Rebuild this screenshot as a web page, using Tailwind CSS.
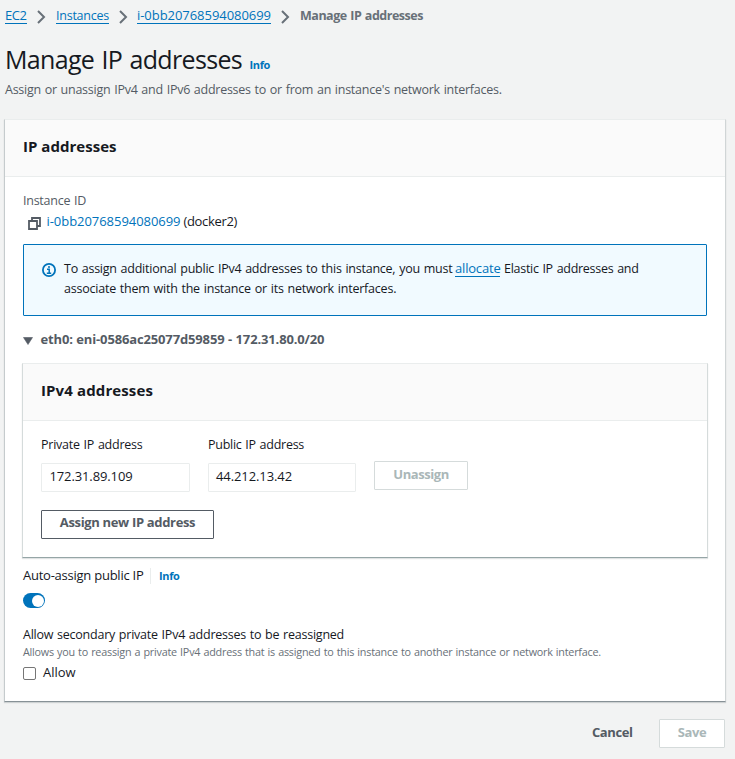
<!DOCTYPE html>
<html lang="en">
<head>
<meta charset="utf-8">
<title>Manage IP addresses</title>
<script src="https://cdn.jsdelivr.net/npm/@tailwindcss/browser@4"></script>
</head>
<body class="h-[759px] overflow-hidden bg-[#f2f3f3] font-['Open_Sans','Noto_Sans',sans-serif] text-[13px] leading-[20px] whitespace-nowrap text-[#16191f]">

<nav class="flex h-[25px] items-start pt-[5px] pl-[5px] text-[#0073bb]">
  <a class="h-[19px] w-[22px] border-b border-[#0073bb] tracking-[-0.45px]">EC2</a>
  <svg class="mt-[5px] ml-[10px] h-[14px] w-[9px]" viewBox="0 0 9 14" fill="none" stroke="#687078" stroke-width="2"><path d="M1 1l6 6-6 6"/></svg>
  <a class="ml-[10px] h-[19px] w-[53px] border-b border-[#0073bb] pt-px text-[12.5px] tracking-[-0.244px]">Instances</a>
  <svg class="mt-[5px] ml-[10px] h-[14px] w-[9px]" viewBox="0 0 9 14" fill="none" stroke="#687078" stroke-width="2"><path d="M1 1l6 6-6 6"/></svg>
  <a class="ml-[9px] h-[19px] w-[134px] border-b border-[#0073bb] tracking-[-0.046px]">i-0bb20768594080699</a>
  <svg class="mt-[5px] ml-[10px] h-[14px] w-[9px]" viewBox="0 0 9 14" fill="none" stroke="#687078" stroke-width="2"><path d="M1 1l6 6-6 6"/></svg>
  <span class="mt-px ml-[10px] text-[12.5px] font-bold tracking-[-0.48px] [word-spacing:0.8px] text-[#687078]">Manage IP addresses</span>
</nav>

<header class="mt-[16px] h-[78px] pl-[5px]">
  <div class="flex h-[38px] items-baseline">
    <h1 class="w-[244.5px] text-[25px] leading-[36px] tracking-[-0.67px] [word-spacing:1.5px]">Manage IP addresses</h1>
    <a class="text-[11px] font-bold tracking-[-0.37px] text-[#0073bb]">Info</a>
  </div>
  <p class="h-[20px] pt-px text-[12.5px] tracking-[-0.254px] [word-spacing:0.8px] text-[#545b64]">Assign or unassign IPv4 and IPv6 addresses to or from an instance's network interfaces.</p>
</header>

<main class="ml-[4px] h-[583px] w-[722px] border border-t-[#eaeded] border-r-[#d0d5d6] border-b-[#879196] border-l-[#c5cbcd] bg-white shadow-[0_1px_1px_rgba(0,28,36,0.15)]">
  <div class="h-[57px] border-b border-[#eaeded] bg-[#fafafa] pt-[15px] pl-[18px]">
    <h2 class="text-[15px] leading-[22px] font-bold tracking-[0.022px]">IP addresses</h2>
  </div>

  <div class="px-[18px] pt-[13px]">
    <div class="h-[20px] pt-px text-[12.5px] tracking-[-0.255px] [word-spacing:0.8px] text-[#545b64]">Instance ID</div>
    <div class="mt-[1px] flex">
      <svg class="mt-[6px] ml-[5px] h-[13px] w-[13px]" viewBox="0 0 13 13" fill="none" stroke="#545b64" stroke-width="1.8"><path d="M1 4h8v8H1zM4 4V1h8v8H9"/></svg>
      <a class="ml-[5.5px] w-[137px] tracking-[-0.046px] text-[#0073bb]">i-0bb20768594080699</a>
      <span class="tracking-[-0.339px]">(docker2)</span>
    </div>

    <section class="mt-[13px] flex h-[72px] rounded-[1px] border border-[#0073bb] bg-[#f1faff] pt-[13px] pl-[18px]">
      <svg class="mt-[5px] h-[14px] w-[14px]" viewBox="0 0 14 14" fill="none" stroke="#0073bb"><circle cx="7" cy="7" r="6.1" stroke-width="1.8"/><path d="M7 3v2M5 6.3h2.2v4M4.8 10.2h4.4" stroke-width="1.5"/></svg>
      <div class="ml-[8px]">
        <div class="flex h-[20px]">
          <span class="mt-px w-[391px] text-[12.5px] tracking-[-0.24px] [word-spacing:0.8px]">To assign additional public IPv4 addresses to this instance, you must</span>
          <a class="h-[19px] w-[45px] border-b border-[#0073bb] tracking-[-0.188px] text-[#0073bb]">allocate</a>
          <span class="mt-px ml-[4px] text-[12.5px] tracking-[-0.28px] [word-spacing:0.8px]">Elastic IP addresses and</span>
        </div>
        <div class="h-[20px] pt-px text-[12.5px] tracking-[-0.217px] [word-spacing:0.8px]">associate them with the instance or its network interfaces.</div>
      </div>
    </section>

    <div class="mt-[13px] flex font-bold text-[#545b64]">
      <svg class="mt-[8px] h-[8px] w-[10px]" viewBox="0 0 10 8"><path d="M.5.5h9L5 7.5z" fill="#545b64" stroke="#545b64" stroke-width=".6"/></svg>
      <span class="ml-[7.5px] tracking-[-0.145px] [word-spacing:0.3px]">eth0: eni-0586ac25077d59859 - 172.31.80.0/20</span>
    </div>

    <section class="mt-[14px] -ml-px h-[195px] w-[686px] border border-t-[#eaeded] border-r-[#d5dbdb] border-b-[#95a5a6] border-l-[#d5dbdb] shadow-[0_1px_1px_rgba(0,28,36,0.12)]">
      <div class="h-[57px] border-b border-[#eaeded] bg-[#fafafa] pt-[15px] pl-[18px]">
        <h3 class="text-[15px] leading-[22px] font-bold tracking-[0.118px]">IPv4 addresses</h3>
      </div>
      <div class="pt-[13px] pl-[18px]">
        <div class="flex items-start">
          <div class="w-[149px]">
            <div class="h-[20px] pt-px text-[12.5px] tracking-[-0.24px] [word-spacing:0.8px]">Private IP address</div>
            <div class="mt-[9px] h-[29px] rounded-[1px] border border-[#eaeded] pt-[2px] pl-[7.5px] tracking-[-0.121px]">172.31.89.109</div>
          </div>
          <div class="ml-[18px] w-[148px]">
            <div class="h-[20px] pt-px text-[12.5px] tracking-[-0.265px] [word-spacing:0.8px]">Public IP address</div>
            <div class="mt-[9px] h-[29px] rounded-[1px] border border-[#eaeded] pt-[2px] pl-[7px] tracking-[-0.096px]">44.212.13.42</div>
          </div>
          <button class="mt-[27px] ml-[18px] h-[29px] w-[94px] rounded-[1px] border border-[#d5dbdb] pb-[4px] font-bold tracking-[-0.439px] text-[#aab7b8]">Unassign</button>
        </div>
        <button class="mt-[18px] block h-[29px] w-[173px] rounded-[1px] border border-[#545b64] pb-[5px] font-bold tracking-[-0.334px] text-[#545b64]">Assign new IP address</button>
      </div>
    </section>

    <div class="mt-[8px] flex h-[20px] items-center">
      <span class="mb-[2px] w-[127px] tracking-[-0.245px]">Auto-assign public IP</span>
      <span class="h-[16px] w-px bg-[#eaeded]"></span>
      <a class="ml-[8px] text-[11px] font-bold tracking-[-0.37px] text-[#0073bb]">Info</a>
    </div>
    <div class="mt-[7px] flex h-[15px] w-[22px] items-center justify-end rounded-full bg-[#0073bb] pr-[1.5px]">
      <span class="h-[12px] w-[12px] rounded-full bg-white"></span>
    </div>

    <div class="mt-[16px] h-[20px] pt-px text-[12.5px] tracking-[-0.236px] [word-spacing:0.8px]">Allow secondary private IPv4 addresses to be reassigned</div>
    <div class="text-[10.8px] leading-[16px] tracking-[-0.228px] [word-spacing:0.6px] text-[#687078]">Allows you to reassign a private IPv4 address that is assigned to this instance to another instance or network interface.</div>
    <label class="mt-[2px] flex">
      <span class="mt-[5px] h-[13px] w-[13px] rounded-[2px] border border-[#767676] bg-white"></span>
      <span class="ml-[7px] tracking-[-0.037px]">Allow</span>
    </label>
  </div>
</main>

<footer class="mt-[17px] flex justify-end pr-[10px] font-bold">
  <button class="h-[29px] w-[67px] pb-[4px] text-left tracking-[-0.419px] text-[#545b64]">Cancel</button>
  <button class="h-[29px] w-[66px] rounded-[1px] border border-[#d5dbdb] bg-white pb-[4px] tracking-[-0.398px] text-[#aab7b8]">Save</button>
</footer>
</body>
</html>
